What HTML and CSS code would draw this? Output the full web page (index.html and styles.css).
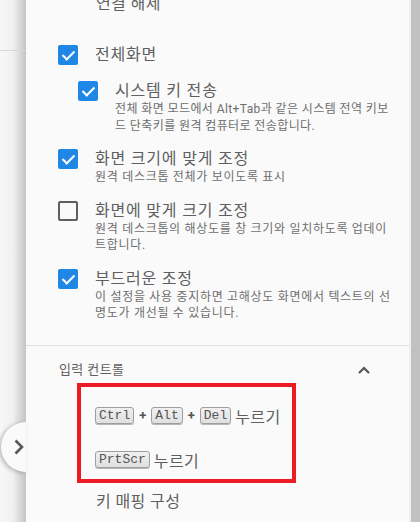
FILE: index.html
```html
<!DOCTYPE html>
<html lang="ko">
<head>
    <meta charset="UTF-8">
    <meta name="viewport" content="width=device-width, initial-scale=1.0">
    <title>원격 데스크톱 - 옵션</title>
    <link rel="stylesheet" href="styles.css">
</head>
<body>
    <div class="screen">
        <div class="backdrop">
            <div class="backdrop-line"></div>
            <!-- Кнопка свернуть панель -->
            <div class="collapse-btn">
                <svg width="12" height="18" viewBox="0 0 12 18"><path d="M2.5 2.5 L9 9 L2.5 15.5" fill="none" stroke="#575757" stroke-width="2.6"/></svg>
            </div>
        </div>

        <div class="panel">
            <div class="action">연결 해제</div>

            <div class="option">
                <span class="checkbox checked"></span>
                <div class="option-text">
                    <div class="option-label">전체화면</div>
                </div>
            </div>

            <div class="option sub">
                <span class="checkbox checked"></span>
                <div class="option-text">
                    <div class="option-label">시스템 키 전송</div>
                    <div class="option-desc">전체 화면 모드에서 Alt+Tab과 같은 시스템 전역 키보드 단축키를 원격 컴퓨터로 전송합니다.</div>
                </div>
            </div>

            <div class="option">
                <span class="checkbox checked"></span>
                <div class="option-text">
                    <div class="option-label">화면 크기에 맞게 조정</div>
                    <div class="option-desc">원격 데스크톱 전체가 보이도록 표시</div>
                </div>
            </div>

            <div class="option">
                <span class="checkbox"></span>
                <div class="option-text">
                    <div class="option-label">화면에 맞게 크기 조정</div>
                    <div class="option-desc">원격 데스크톱의 해상도를 창 크기와 일치하도록 업데이트합니다.</div>
                </div>
            </div>

            <div class="option">
                <span class="checkbox checked"></span>
                <div class="option-text">
                    <div class="option-label">부드러운 조정</div>
                    <div class="option-desc">이 설정을 사용 중지하면 고해상도 화면에서 텍스트의 선명도가 개선될 수 있습니다.</div>
                </div>
            </div>

            <div class="divider"></div>

            <!-- Ввод -->
            <div class="section-head">
                <span>입력 컨트롤</span>
                <svg width="14" height="10" viewBox="0 0 14 10"><path d="M2 8 L7 3 L12 8" fill="none" stroke="#555" stroke-width="2.2"/></svg>
            </div>

            <div class="highlight">
                <div class="key-row">
                    <kbd>Ctrl</kbd><span class="plus">+</span><kbd>Alt</kbd><span class="plus">+</span><kbd>Del</kbd>
                    <span class="key-label">누르기</span>
                </div>
                <div class="key-row">
                    <kbd>PrtScr</kbd>
                    <span class="key-label">누르기</span>
                </div>
            </div>

            <div class="action">키 매핑 구성</div>
        </div>

        <div class="scroll-track"></div>
        <div class="scroll-thumb"></div>
    </div>
</body>
</html>
```

FILE: styles.css
```css
body {
    margin: 0;
    padding: 0;
    font-family: Roboto, "Noto Sans CJK KR", sans-serif;
    background-color: #f7f7f7;
    color: #5a5a5a;
    overflow: hidden;
}

.screen {
    display: flex;
    height: 522px;
}

/* Фон слева */
.backdrop {
    width: 26px;
    flex-shrink: 0;
    position: relative;
    background: linear-gradient(to right, #f8f8f8 0%, #f0f0f0 50%, #c4c4c4 100%);
}

.backdrop-line {
    height: 1px;
    margin-top: 50px;
    background-color: #d6d6d6;
}

.collapse-btn {
    position: absolute;
    left: 1px;
    top: 422px;
    width: 25px;
    height: 50px;
    border-radius: 25px 0 0 25px;
    background-color: #fafafa;
    box-shadow: -2px 1px 4px rgba(0, 0, 0, 0.25);
    display: flex;
    align-items: center;
    padding-left: 12px;
    box-sizing: border-box;
    z-index: 2;
}

/* Панель настроек */
.panel {
    flex: 1;
    background-color: #fafafa;
    padding: 0 17px 0 32px;
    display: flex;
    flex-direction: column;
    z-index: 1;
}

.action {
    font-size: 16px;
    line-height: 20px;
    letter-spacing: 0.4px;
    color: #5f5f5f;
    padding-left: 38px;
    margin-top: -6px;
}

.option {
    display: flex;
    gap: 17px;
    margin-top: 15px;
}

.panel .action + .option {
    margin-top: 31px;
}

.option.sub {
    padding-left: 20px;
    margin-top: 16px;
}

.checkbox {
    width: 20px;
    height: 20px;
    flex-shrink: 0;
    box-sizing: border-box;
    border: 2px solid #5f5f5f;
    border-radius: 2px;
    position: relative;
}

.checkbox.checked {
    background-color: #1f87e5;
    border-color: #1f87e5;
}

.checkbox.checked::after {
    content: "";
    position: absolute;
    left: 5px;
    top: 1px;
    width: 5px;
    height: 10px;
    border: solid #fff;
    border-width: 0 2px 2px 0;
    transform: rotate(45deg);
}

.option-text {
    flex: 1;
}

.option-label {
    font-size: 16px;
    line-height: 20px;
    letter-spacing: 0.8px;
    color: #5f5f5f;
}

.option-desc {
    font-size: 12px;
    line-height: 16.5px;
    letter-spacing: 0.7px;
    color: #6e6e6e;
}

.option.sub .option-desc {
    letter-spacing: 0.4px;
    margin-right: -4px;
}

.divider {
    height: 1px;
    background-color: #e0e0e0;
    margin: 23px -17px 0 -32px;
}

.section-head {
    display: flex;
    justify-content: space-between;
    align-items: center;
    font-size: 13px;
    line-height: 20px;
    letter-spacing: 0.4px;
    color: #5f5f5f;
    margin-top: 14px;
    padding-left: 1px;
    padding-right: 21px;
}

/* Красная рамка */
.highlight {
    width: 219px;
    height: 100px;
    box-sizing: border-box;
    border: 4px solid #ed1c24;
    margin: 3px 0 0 19px;
    padding: 17px 0 0 14px;
    display: flex;
    flex-direction: column;
    gap: 20px;
}

.key-row {
    display: flex;
    align-items: center;
    height: 24px;
}

kbd {
    font-family: "Liberation Mono", monospace;
    font-size: 13px;
    line-height: 15px;
    padding: 0 3px;
    color: #555;
    background: linear-gradient(#f0f0f0, #e0e0e0);
    border: 1px solid #9e9e9e;
    border-radius: 3px;
    box-shadow: 0 1px 0 #b8b8b8;
}

.plus {
    font-size: 13px;
    font-weight: bold;
    margin: 0 5px;
    color: #555;
}

.key-label {
    font-size: 16px;
    letter-spacing: 0.4px;
    margin-left: 4px;
    color: #5f5f5f;
}

.highlight + .action {
    margin-top: 9px;
}

/* Полоса прокрутки */
.scroll-track {
    width: 2px;
    background-color: #efefef;
}

.scroll-thumb {
    width: 9px;
    background-color: #c1c1c1;
}
```
